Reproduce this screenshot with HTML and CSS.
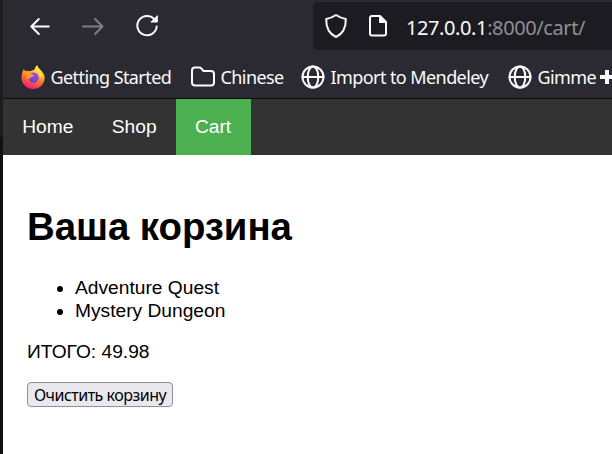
FILE: index.html
```html
<!DOCTYPE html>
<html lang="ru">
<head>
<meta charset="utf-8">
<title>Cart</title>
<link rel="stylesheet" href="styles.css">
</head>
<body>
<div class="edge"></div>
<div class="window">
  <header class="chrome">
    <div class="toolbar">
      <svg class="back" width="24" height="24" viewBox="0 0 24 24"><path d="M21.500 12.500H4M11.500 5L4 12.500 11.500 20" transform="translate(.3)"/></svg>
      <svg class="forward" width="24" height="24" viewBox="0 0 24 24"><path d="M2 12.500h19M14 5l7.500 7.500L14 20"/></svg>
      <svg class="reload" width="24" height="24" viewBox="0 0 24 24"><path d="M19.600 5.500A9.700 9.700 0 1 0 21.700 12.500"/><path class="solid" d="M22.300 2v6h-6z"/></svg>
      <div class="urlbar">
        <svg width="24" height="26" viewBox="0 0 24 26"><path d="M12 2C9 4 5.500 5.500 2.200 6c-.2 7.500 2.300 14.500 9.800 18 7.500-3.500 10-10.500 9.800-18C18.500 5.500 15 4 12 2z"/></svg>
        <svg class="page" width="20" height="24" viewBox="0 0 20 24"><path d="M12 2H4Q2 2 2 4v15.500q0 2 2 2h12q2 0 2-2V8z"/><path class="solid" d="M11.500 2v6.500h6.500z"/></svg>
        <span class="url"><b>127.0.0.1</b>:8000/cart/</span>
      </div>
    </div>
    <div class="bookmarks">
      <a class="bm started">
        <svg width="24" height="24" viewBox="0 0 24 24">
          <defs>
            <linearGradient id="fire" x1=".8" y1="0" x2=".4" y2="1"><stop offset="0" stop-color="#fff44f"/><stop offset=".35" stop-color="#ffbd2f"/><stop offset=".65" stop-color="#ff6a30"/><stop offset="1" stop-color="#f31c76"/></linearGradient>
            <linearGradient id="globe" x1=".7" y1="0" x2=".3" y2="1"><stop offset="0" stop-color="#a34be8"/><stop offset="1" stop-color="#5b45d0"/></linearGradient>
          </defs>
          <path class="fire" d="M2.800 4.200l2.400 2.600c1.500-.7 2.600-.8 4-.6 1.500-.5 2.600-1.200 4.100-1.200C14 2.700 15.300 1 16.200.2c.4 3 4 4.600 5 6.800C23 8.700 23.800 11 23.600 13.200 23.200 19.500 18.300 24 12.200 24 5.700 24 .7 19.200.5 13 .4 9.500 1.500 6.500 2.800 4.200z"/>
          <circle class="globe" cx="12.500" cy="12.600" r="5.200"/>
          <path class="flame" d="M3 6.500c2-.8 4.500-1 6.500 0l1.300 2.800 2.300.8c-.4 1.700-2.600 1.900-3.600 2.400-.4 1.700-2 1.500-3.200 1z"/>
          <path class="flame light" d="M13.500 5.500C14 3 15.300 1 16.200.2c.5 3 4.600 5 5.200 8.500-.2 2.600-1 3.600-2.400 4.500-.3-3.700-2.500-6.600-5.500-7.700z"/>
        </svg><span>Getting Started</span></a>
      <a class="bm chinese"><svg width="24" height="24" viewBox="0 0 24 24"><path d="M4 2.500h4.500q1 0 1.700.8L12.500 6H20q3 0 3 3v8.500q0 3-3 3H4q-3 0-3-3v-12q0-3 3-3z"/></svg><span>Chinese</span></a>
      <a class="bm mendeley"><svg width="24" height="24" viewBox="0 0 24 24"><circle cx="12" cy="12" r="10.500"/><ellipse cx="12" cy="12" rx="5.300" ry="10.500"/><path d="M1.500 12h21"/></svg><span>Import to Mendeley</span></a>
      <a class="bm gimme"><svg width="24" height="24" viewBox="0 0 24 24"><circle cx="12" cy="12" r="10.500"/><ellipse cx="12" cy="12" rx="5.300" ry="10.500"/><path d="M1.500 12h21"/></svg><span>Gimme</span><i class="plus"></i></a>
    </div>
  </header>
  <nav class="nav"><a>Home</a><a>Shop</a><a class="active">Cart</a></nav>
  <main class="content">
    <h1>Ваша корзина</h1>
    <ul><li>Adventure Quest</li><li>Mystery Dungeon</li></ul>
    <p>ИТОГО: 49.98</p>
    <button>Очистить корзину</button>
  </main>
</div>
</body>
</html>
```
FILE: styles.css
```css
* { box-sizing: border-box; }
body {
  margin: 0;
  height: 454px;
  display: flex;
  overflow: hidden;
  background: #fff;
  font: 19.2px/23px "Liberation Sans", Arial, sans-serif;
  color: #000;
}
.edge {
  flex: 0 0 3px;
  background: linear-gradient(#1d1d1d 137px, #101012 137px);
}
.window { flex: 1; min-width: 0; }

.chrome {
  height: 99px;
  background: #2b2a33;
  border-bottom: 1px solid #0c0c0d;
  font-family: "Noto Sans", "Open Sans", sans-serif;
  color: #fbfbfe;
}
.chrome svg {
  flex: none;
  fill: none;
  stroke: #fbfbfe;
  stroke-width: 2;
  stroke-linecap: round;
  stroke-linejoin: round;
}
.chrome svg .solid { fill: #fbfbfe; stroke-width: 1; }
.toolbar { display: flex; align-items: center; height: 52px; padding-left: 24px; }
.forward { margin-left: 30px; opacity: .4; }
.reload { margin-left: 30px; }
.urlbar {
  flex: 1;
  display: flex;
  align-items: center;
  height: 48px;
  margin-left: 154px;
  padding-left: 11px;
  background: #1c1b22;
  border-radius: 5px 0 0 5px;
}
.page { margin-left: 20px; }
.url { margin-left: 18px; font-size: 20px; letter-spacing: -.4px; color: #8f8f96; white-space: nowrap; padding-top: 2px; }
.url b { font-weight: 400; color: #fbfbfe; }
.bookmarks { display: flex; align-items: center; height: 46px; padding: 4px 0 0 18px; }
.bm { display: flex; align-items: center; flex: none; font-size: 18px; white-space: nowrap; letter-spacing: -.58px; }
.bm span { margin-left: 5.5px; }
.started { width: 170px; }
.chinese { width: 110px; }
.mendeley { width: 207px; }
.gimme span { width: 62.5px; }
.chrome .fire { fill: url(#fire); stroke: none; }
.chrome .globe { fill: url(#globe); stroke: none; }
.chrome .flame { fill: #ff9a2b; stroke: none; }
.chrome .light { fill: #ffe04a; }
.plus {
  width: 14px;
  height: 14px;
  background: linear-gradient(#fbfbfe, #fbfbfe) center / 14px 4px no-repeat, linear-gradient(#fbfbfe, #fbfbfe) center / 4px 14px no-repeat;
}

.nav { display: flex; height: 56px; background: #333; color: #fff; }
.nav a { padding: 16px 19.2px; }
.nav .active { width: 75px; background: #4caf50; }

.content { padding: 24px; }
h1 { margin: 26px 0 27px; font-size: 38.4px; line-height: 44px; letter-spacing: -.05px; }
ul { margin: 0; padding-left: 48px; }
p { margin: 18px 0 19px; }
button {
  display: block;
  width: 146px;
  height: 25px;
  padding: 1px 0 0;
  border: 1px solid #8f8f9d;
  border-radius: 4px;
  background: #e9e9ed;
  color: #000;
  font: 16px/22px "Noto Sans", "Open Sans", sans-serif;
  letter-spacing: -.5px;
  white-space: nowrap;
}
```
